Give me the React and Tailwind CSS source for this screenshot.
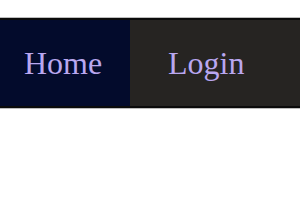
export default function App() {
  return (
    <div className="min-h-[210px] bg-white pt-[17px]">
      <div className="border-y border-[#bdbdbd]">
        <nav className="flex h-[90px] border-y-2 border-[#0b0b0b] bg-[#262422] font-['Liberation_Serif',serif] text-[32px] text-[#b9a7f0]">
          <a href="#" className="flex w-[130px] items-center bg-[#030b2c] pl-[24px]">
            Home
          </a>
          <a href="#" className="flex items-center pl-[38px]">
            Login
          </a>
        </nav>
      </div>
    </div>
  );
}
